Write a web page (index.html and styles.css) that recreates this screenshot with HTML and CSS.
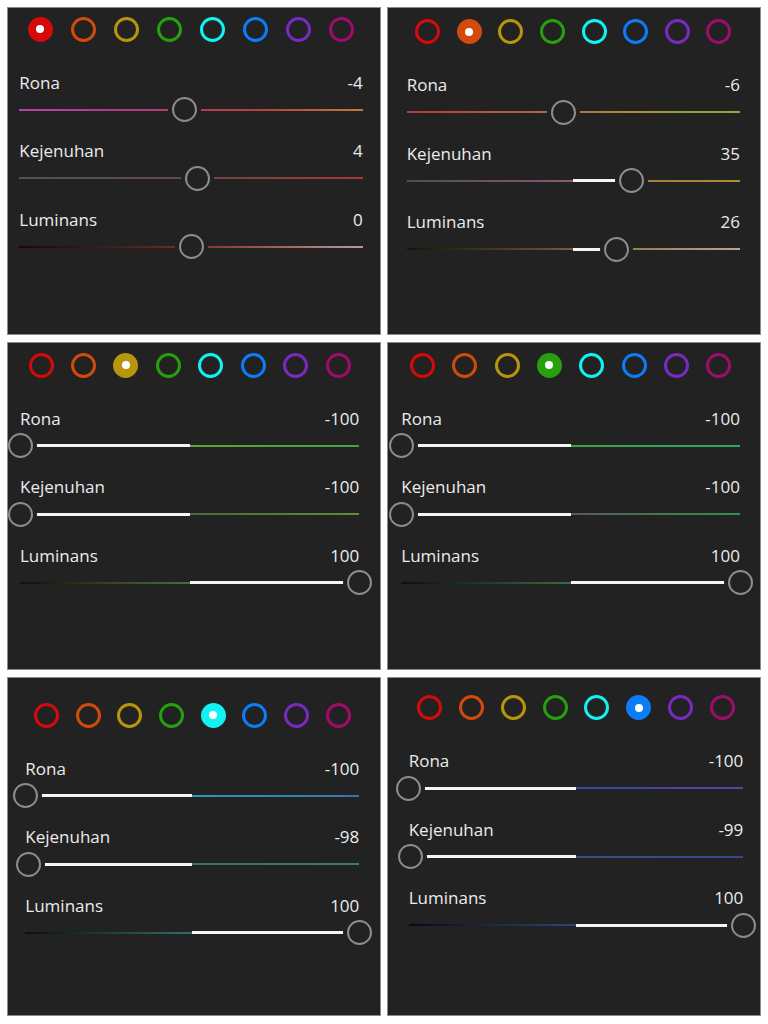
FILE: index.html
```html
<!DOCTYPE html>
<html lang="id">
<head>
<meta charset="utf-8">
<title>Campuran Warna</title>
<link rel="stylesheet" href="styles.css">
</head>
<body>
<main class="grid">

  <section class="panel p1">
    <div class="swatches">
      <span class="sw c-red on"></span><span class="sw c-orange"></span><span class="sw c-yellow"></span><span class="sw c-green"></span><span class="sw c-aqua"></span><span class="sw c-blue"></span><span class="sw c-purple"></span><span class="sw c-magenta"></span>
    </div>
    <div class="ctrl">
      <div class="ctrl-head"><span>Rona</span><span>-4</span></div>
      <div class="slider"><div class="track red-hue"></div><div class="thumb" style="left:48%"></div></div>
    </div>
    <div class="ctrl">
      <div class="ctrl-head"><span>Kejenuhan</span><span>4</span></div>
      <div class="slider"><div class="track red-sat"></div><div class="thumb" style="left:52%"></div></div>
    </div>
    <div class="ctrl">
      <div class="ctrl-head"><span>Luminans</span><span>0</span></div>
      <div class="slider"><div class="track red-lum"></div><div class="thumb" style="left:50%"></div></div>
    </div>
  </section>

  <section class="panel p2">
    <div class="swatches">
      <span class="sw c-red"></span><span class="sw c-orange on"></span><span class="sw c-yellow"></span><span class="sw c-green"></span><span class="sw c-aqua"></span><span class="sw c-blue"></span><span class="sw c-purple"></span><span class="sw c-magenta"></span>
    </div>
    <div class="ctrl">
      <div class="ctrl-head"><span>Rona</span><span>-6</span></div>
      <div class="slider"><div class="track orange-hue"></div><div class="thumb" style="left:47%"></div></div>
    </div>
    <div class="ctrl">
      <div class="ctrl-head"><span>Kejenuhan</span><span>35</span></div>
      <div class="slider"><div class="track orange-sat"></div><div class="fill" style="left:50%;width:17.5%"></div><div class="thumb" style="left:67.5%"></div></div>
    </div>
    <div class="ctrl">
      <div class="ctrl-head"><span>Luminans</span><span>26</span></div>
      <div class="slider"><div class="track orange-lum"></div><div class="fill" style="left:50%;width:13%"></div><div class="thumb" style="left:63%"></div></div>
    </div>
  </section>

  <section class="panel p3">
    <div class="swatches">
      <span class="sw c-red"></span><span class="sw c-orange"></span><span class="sw c-yellow on"></span><span class="sw c-green"></span><span class="sw c-aqua"></span><span class="sw c-blue"></span><span class="sw c-purple"></span><span class="sw c-magenta"></span>
    </div>
    <div class="ctrl">
      <div class="ctrl-head"><span>Rona</span><span>-100</span></div>
      <div class="slider"><div class="track yellow-hue"></div><div class="fill" style="left:0%;width:50%"></div><div class="thumb" style="left:0%"></div></div>
    </div>
    <div class="ctrl">
      <div class="ctrl-head"><span>Kejenuhan</span><span>-100</span></div>
      <div class="slider"><div class="track yellow-sat"></div><div class="fill" style="left:0%;width:50%"></div><div class="thumb" style="left:0%"></div></div>
    </div>
    <div class="ctrl">
      <div class="ctrl-head"><span>Luminans</span><span>100</span></div>
      <div class="slider"><div class="track yellow-lum"></div><div class="fill" style="left:50%;width:50%"></div><div class="thumb" style="left:100%"></div></div>
    </div>
  </section>

  <section class="panel p4">
    <div class="swatches">
      <span class="sw c-red"></span><span class="sw c-orange"></span><span class="sw c-yellow"></span><span class="sw c-green on"></span><span class="sw c-aqua"></span><span class="sw c-blue"></span><span class="sw c-purple"></span><span class="sw c-magenta"></span>
    </div>
    <div class="ctrl">
      <div class="ctrl-head"><span>Rona</span><span>-100</span></div>
      <div class="slider"><div class="track green-hue"></div><div class="fill" style="left:0%;width:50%"></div><div class="thumb" style="left:0%"></div></div>
    </div>
    <div class="ctrl">
      <div class="ctrl-head"><span>Kejenuhan</span><span>-100</span></div>
      <div class="slider"><div class="track green-sat"></div><div class="fill" style="left:0%;width:50%"></div><div class="thumb" style="left:0%"></div></div>
    </div>
    <div class="ctrl">
      <div class="ctrl-head"><span>Luminans</span><span>100</span></div>
      <div class="slider"><div class="track green-lum"></div><div class="fill" style="left:50%;width:50%"></div><div class="thumb" style="left:100%"></div></div>
    </div>
  </section>

  <section class="panel p5">
    <div class="swatches">
      <span class="sw c-red"></span><span class="sw c-orange"></span><span class="sw c-yellow"></span><span class="sw c-green"></span><span class="sw c-aqua on"></span><span class="sw c-blue"></span><span class="sw c-purple"></span><span class="sw c-magenta"></span>
    </div>
    <div class="ctrl">
      <div class="ctrl-head"><span>Rona</span><span>-100</span></div>
      <div class="slider"><div class="track aqua-hue"></div><div class="fill" style="left:0%;width:50%"></div><div class="thumb" style="left:0%"></div></div>
    </div>
    <div class="ctrl">
      <div class="ctrl-head"><span>Kejenuhan</span><span>-98</span></div>
      <div class="slider"><div class="track aqua-sat"></div><div class="fill" style="left:1%;width:49%"></div><div class="thumb" style="left:1%"></div></div>
    </div>
    <div class="ctrl">
      <div class="ctrl-head"><span>Luminans</span><span>100</span></div>
      <div class="slider"><div class="track aqua-lum"></div><div class="fill" style="left:50%;width:50%"></div><div class="thumb" style="left:100%"></div></div>
    </div>
  </section>

  <section class="panel p6">
    <div class="swatches">
      <span class="sw c-red"></span><span class="sw c-orange"></span><span class="sw c-yellow"></span><span class="sw c-green"></span><span class="sw c-aqua"></span><span class="sw c-blue on"></span><span class="sw c-purple"></span><span class="sw c-magenta"></span>
    </div>
    <div class="ctrl">
      <div class="ctrl-head"><span>Rona</span><span>-100</span></div>
      <div class="slider"><div class="track blue-hue"></div><div class="fill" style="left:0%;width:50%"></div><div class="thumb" style="left:0%"></div></div>
    </div>
    <div class="ctrl">
      <div class="ctrl-head"><span>Kejenuhan</span><span>-99</span></div>
      <div class="slider"><div class="track blue-sat"></div><div class="fill" style="left:0.5%;width:49.5%"></div><div class="thumb" style="left:0.5%"></div></div>
    </div>
    <div class="ctrl">
      <div class="ctrl-head"><span>Luminans</span><span>100</span></div>
      <div class="slider"><div class="track blue-lum"></div><div class="fill" style="left:50%;width:50%"></div><div class="thumb" style="left:100%"></div></div>
    </div>
  </section>

</main>
</body>
</html>
```

FILE: styles.css
```css
* { box-sizing: border-box; }

html, body {
  margin: 0;
  background: #ffffff;
}

body {
  padding: 7px 7px 0 7px;
  font-family: "Open Sans", "Liberation Sans", sans-serif;
}

.grid {
  display: grid;
  grid-template-columns: 374px 374px;
  grid-template-rows: 328px 328px 339px;
  column-gap: 6px;
  row-gap: 7px;
}

.panel {
  background: #222222;
  border: 1px solid #8a8a8a;
  overflow: hidden;
  color: #ececec;
  display: flex;
  flex-direction: column;
}

.p1 { padding: 8.5px 17.3px 0 11.3px; }
.p2 { padding: 11px 20px 0 18.7px; }
.p3 { padding: 9.5px 20.7px 0 12px; }
.p4 { padding: 9.5px 20px 0 13.3px; }
.p5 { padding: 24.5px 20.7px 0 17.3px; }
.p6 { padding: 17px 16.7px 0 20.7px; }

/* colour swatches */
.swatches {
  display: flex;
  justify-content: space-between;
  padding: 0 8.5px;
  margin-bottom: 30px;
}

.sw {
  width: 25px;
  height: 25px;
  border-radius: 50%;
  border: 3px solid currentColor;
  display: flex;
  align-items: center;
  justify-content: center;
}

.sw.on { background: currentColor; }
.sw.on::after {
  content: "";
  width: 8px;
  height: 8px;
  border-radius: 50%;
  background: #ffffff;
}

.c-red { color: #d60a0a; }
.c-orange { color: #d24a0c; }
.c-yellow { color: #b8960c; }
.c-green { color: #26a00e; }
.c-aqua { color: #12f2f2; }
.c-blue { color: #0c7cf8; }
.c-purple { color: #7a2ac2; }
.c-magenta { color: #a00c6c; }

/* slider rows */
.ctrl + .ctrl { margin-top: 18px; }

.ctrl-head {
  display: flex;
  justify-content: space-between;
  font-size: 17px;
  line-height: 22px;
  margin-bottom: 3.5px;
}

.slider {
  position: relative;
  height: 25px;
}

.track {
  position: absolute;
  left: 0;
  right: 0;
  top: 11.5px;
  height: 2px;
}

.fill {
  position: absolute;
  top: 11px;
  height: 3px;
  background: #f6f6f6;
}

.thumb {
  position: absolute;
  top: 0;
  width: 25px;
  height: 25px;
  margin-left: -12.5px;
  border-radius: 50%;
  border: 2.5px solid #8c8c8c;
  background: #222222;
  box-shadow: 0 0 0 4px #222222;
}

/* track gradients */
.red-hue { background: linear-gradient(90deg, #b444ae 0%, #ac3e8e 25%, #b03e5e 50%, #b44040 70%, #bc7c3e 100%); }
.red-sat { background: linear-gradient(90deg, #525252 0%, #644a4a 50%, #ac3434 100%); }
.red-lum { background: linear-gradient(90deg, #1c0606 0%, #5e2626 40%, #8a4040 60%, #bc9898 100%); }

.orange-hue { background: linear-gradient(90deg, #b43c3c 0%, #b4643e 40%, #ac8c32 65%, #8cac3c 100%); }
.orange-sat { background: linear-gradient(90deg, #4e4e4e 0%, #7e5474 40%, #8e6454 52%, #9e7e3c 70%, #ac8e34 100%); }
.orange-lum { background: linear-gradient(90deg, #1a1408 0%, #5e4c2c 40%, #8e7444 60%, #b8a886 100%); }

.yellow-hue { background: linear-gradient(90deg, #c4a434 0%, #64a434 50%, #4ca43c 75%, #44a444 100%); }
.yellow-sat { background: linear-gradient(90deg, #545454 0%, #4e683c 50%, #5e8e34 100%); }
.yellow-lum { background: linear-gradient(90deg, #0c1208 0%, #304420 25%, #4e6e34 50%, #a4c484 100%); }

.green-hue { background: linear-gradient(90deg, #84a434 0%, #3ca44c 50%, #34a464 100%); }
.green-sat { background: linear-gradient(90deg, #545454 0%, #5a5a5a 50%, #32904a 100%); }
.green-lum { background: linear-gradient(90deg, #081008 0%, #203e28 25%, #326e44 50%, #94c4a4 100%); }

.aqua-hue { background: linear-gradient(90deg, #34a464 0%, #2c9cac 50%, #3474b4 100%); }
.aqua-sat { background: linear-gradient(90deg, #545454 0%, #3e6e6e 50%, #327e7c 100%); }
.aqua-lum { background: linear-gradient(90deg, #081010 0%, #1e3e3e 25%, #326c6c 50%, #94c4c4 100%); }

.blue-hue { background: linear-gradient(90deg, #2e94b4 0%, #324e9e 50%, #5e3ea4 100%); }
.blue-sat { background: linear-gradient(90deg, #545454 0%, #3e4e7c 50%, #34488e 100%); }
.blue-lum { background: linear-gradient(90deg, #060818 0%, #1e2848 25%, #324474 50%, #94a4cc 100%); }
```
